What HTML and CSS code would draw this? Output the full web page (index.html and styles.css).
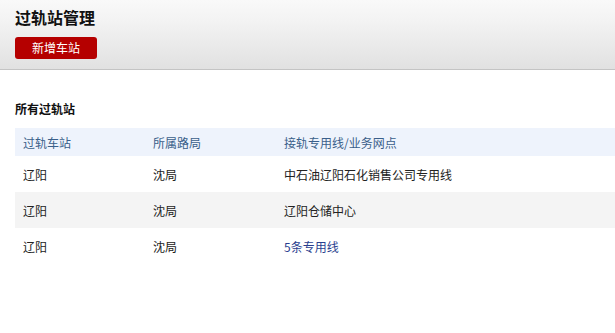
FILE: index.html
```html
<!DOCTYPE html>
<html lang="zh">
<head>
<meta charset="utf-8">
<link rel="stylesheet" href="styles.css">
</head>
<body>
<header class="page-header">
  <h1 class="page-title">过轨站管理</h1>
  <button class="btn-add">新增车站</button>
</header>
<section class="content">
  <h2 class="section-title">所有过轨站</h2>
  <table class="list">
    <thead>
      <tr><th class="c1">过轨车站</th><th class="c2">所属路局</th><th>接轨专用线/业务网点</th></tr>
    </thead>
    <tbody>
      <tr><td>辽阳</td><td>沈局</td><td>中石油辽阳石化销售公司专用线</td></tr>
      <tr class="alt"><td>辽阳</td><td>沈局</td><td>辽阳仓储中心</td></tr>
      <tr><td>辽阳</td><td>沈局</td><td><a class="link" href="#">5条专用线</a></td></tr>
    </tbody>
  </table>
</section>
</body>
</html>
```

FILE: styles.css
```css
html, body {
  margin: 0;
  padding: 0;
  background: #fff;
  font-family: "Noto Sans CJK SC", "Liberation Sans", sans-serif;
  color: #222;
}
.page-header {
  height: 69px;
  border-bottom: 1px solid #c4c4c4;
  background: linear-gradient(to bottom, #f9f9f9 0%, #f3f3f3 30%, #e1e1e1 100%);
  padding: 0 15px;
  box-sizing: content-box;
  display: flex;
  flex-direction: column;
  align-items: flex-start;
}
.page-title {
  margin: 6px 0 0;
  font-size: 16px;
  line-height: 22px;
  font-weight: bold;
  color: #111;
}
.btn-add {
  margin-top: 9px;
  width: 82px;
  height: 22px;
  border: none;
  border-radius: 3px;
  background: #b50000;
  color: #fff;
  font-family: inherit;
  font-size: 12px;
  line-height: 22px;
  padding: 0;
}
.content {
  padding-left: 15px;
}
.section-title {
  margin: 30px 0 0;
  font-size: 12px;
  line-height: 18px;
  font-weight: bold;
  color: #111;
}
.list {
  margin-top: 10px;
  width: 100%;
  border-collapse: collapse;
  font-size: 12px;
}
.list th {
  text-align: left;
  font-weight: normal;
  color: #3a5f8a;
  background: #eef3fc;
  height: 28px;
  padding: 0 8px;
}
.list th.c1 { width: 114px; }
.list th.c2 { width: 115px; }
.list td {
  height: 36px;
  padding: 0 8px;
  color: #222;
}
.list tr.alt td { background: #f4f4f4; }
.link {
  color: #2a3f8f;
  text-decoration: none;
}
```
